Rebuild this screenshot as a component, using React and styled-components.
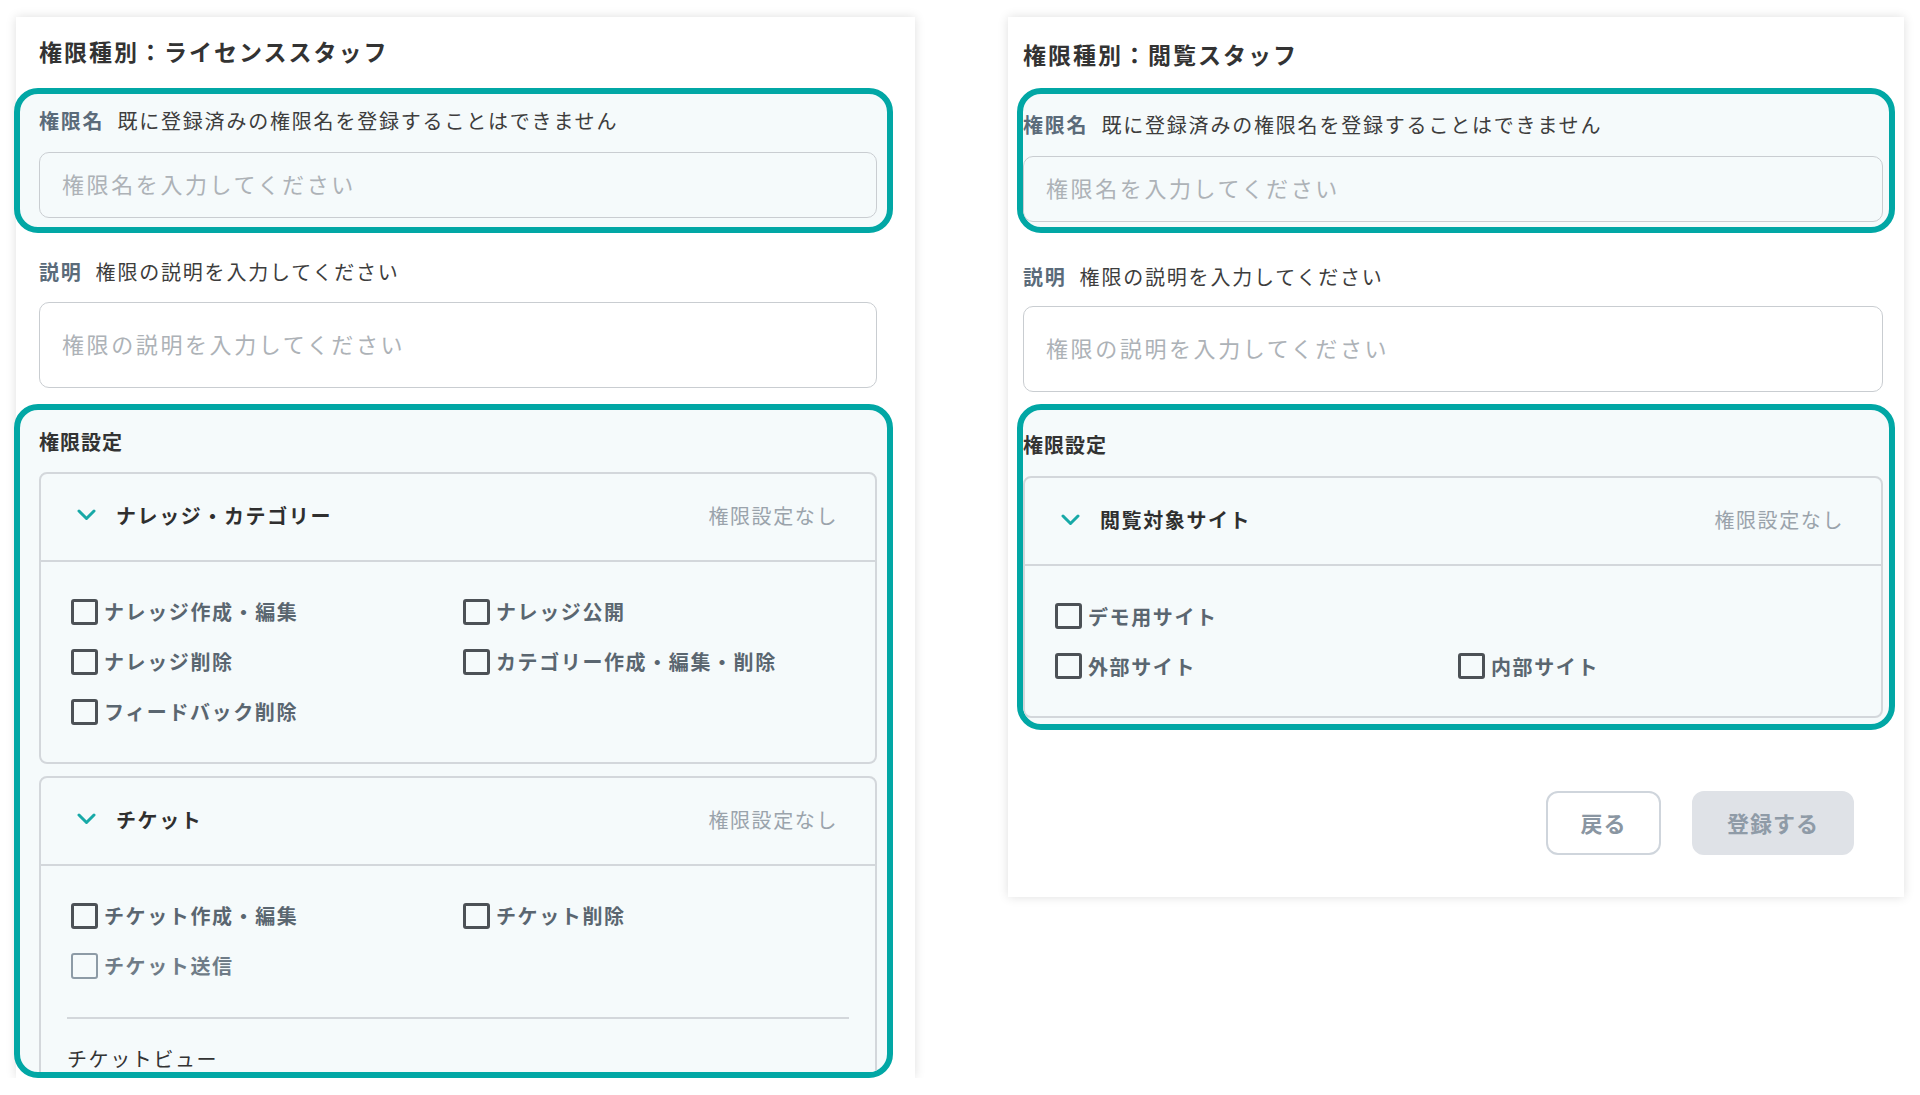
import styled, { createGlobalStyle } from "styled-components";

const GlobalStyle = createGlobalStyle`
  body {
    margin: 0;
    background: #ffffff;
    font-family: "Noto Sans CJK JP", "Noto Sans", sans-serif;
    color: #333;
  }
`;

const Page = styled.div`
  display: flex;
  align-items: flex-start;
  gap: 93px;
  padding: 17px 0 0 16px;
`;

// 画面のキャプチャ1枚分
const Panel = styled.section`
  width: ${(p) => p.$w}px;
  height: ${(p) => p.$h}px;
  box-sizing: border-box;
  padding: ${(p) => p.$pad};
  background: #fff;
  box-shadow: 0 0 10px rgba(0, 0, 0, 0.13);
  display: flex;
  flex-direction: column;
`;

const Title = styled.h2`
  margin: 0 0 ${(p) => p.$mb}px;
  font-size: 23px;
  line-height: 34px;
  font-weight: 700;
  letter-spacing: 2px;
  color: #333;
`;

// 注目箇所を囲む枠
const Highlight = styled.div`
  border: 6px solid #01a7a5;
  border-radius: 24px;
  background: #f5fafb;
  margin: ${(p) => p.$mt || 0}px ${(p) => p.$mr}px 0 ${(p) => p.$ml}px;
  padding: ${(p) => p.$pad};
  height: ${(p) => (p.$h ? `${p.$h}px` : "auto")};
  box-sizing: border-box;
  overflow: hidden;
  display: flex;
  flex-direction: column;
`;

const Field = styled.div`
  display: flex;
  flex-direction: column;
  gap: ${(p) => p.$gap}px;
  margin-top: ${(p) => p.$mt || 0}px;
`;

const LabelRow = styled.div`
  display: flex;
  align-items: center;
  gap: 13px;
  font-size: 20px;
  line-height: 30px;
  letter-spacing: 1.8px;
  white-space: nowrap;
`;

const LabelName = styled.span`
  font-weight: 700;
  color: #5b6b7a;
`;

const LabelNote = styled.span`
  color: #3d3d3d;
`;

const TextInput = styled.input`
  height: ${(p) => p.$h}px;
  box-sizing: border-box;
  border: 1.5px solid #c9cdd1;
  border-radius: 10px;
  background: transparent;
  padding: 0 22px 4px;
  font-family: inherit;
  font-size: 22px;
  letter-spacing: 2.6px;
  color: #333;
  outline: none;
  &::placeholder {
    color: #adb2b7;
  }
`;

const SectionLabel = styled.div`
  font-size: 20px;
  line-height: 30px;
  font-weight: 700;
  letter-spacing: 1px;
  color: #333;
  margin-bottom: ${(p) => p.$mb}px;
`;

const Card = styled.div`
  border: 2px solid #d3d7db;
  border-radius: 8px;
  background: #f5fafb;
  flex-shrink: 0;
  & + & {
    margin-top: 12px;
  }
`;

const CardHeader = styled.div`
  height: 88px;
  box-sizing: border-box;
  display: flex;
  align-items: center;
  padding: 0 37px 3px 36px;
  border-bottom: 2px solid #d3d7db;
`;

const Chevron = styled.svg`
  width: 19px;
  height: 12px;
  margin-right: 20px;
  flex-shrink: 0;
`;

const CardTitle = styled.span`
  flex: 1;
  font-size: 20px;
  font-weight: 700;
  letter-spacing: 1.6px;
  color: #2f2f2f;
`;

const CardStatus = styled.span`
  font-size: 20px;
  letter-spacing: 1.6px;
  color: #9aa3ab;
`;

const CardBody = styled.div`
  padding: 35px 30px 35px;
`;

const CheckGrid = styled.div`
  display: grid;
  grid-template-columns: 1fr 1fr;
  column-gap: 10px;
  row-gap: 20px;
`;

const CheckItem = styled.label`
  display: flex;
  align-items: center;
  gap: 6px;
  height: 30px;
  grid-column: ${(p) => (p.$full ? "1 / -1" : "auto")};
  font-size: 20px;
  font-weight: 700;
  letter-spacing: 1.6px;
  color: ${(p) => (p.$disabled ? "#6f7c87" : "#5a6670")};
  white-space: nowrap;
`;

const Box = styled.span`
  width: 27px;
  height: 26px;
  box-sizing: border-box;
  border: 3px solid ${(p) => (p.$disabled ? "#8d9ba6" : "#4c5156")};
  border-width: ${(p) => (p.$disabled ? "2.5px" : "3px")};
  border-radius: 3px;
  flex-shrink: 0;
`;

const SubSection = styled.div`
  margin: 36px -4px 0;
  border-top: 2px solid #d3d7db;
  padding-top: 25px;
`;

const SubTitle = styled.div`
  font-size: 20px;
  line-height: 30px;
  letter-spacing: 1.6px;
  color: #333;
`;

const Actions = styled.div`
  display: flex;
  justify-content: flex-end;
  gap: 31px;
  margin: 61px 29px 0 0;
`;

const Button = styled.button`
  height: 64px;
  width: ${(p) => p.$w}px;
  border-radius: 12px;
  border: 2px solid ${(p) => (p.$primary ? "#dfe2e7" : "#cfd5dc")};
  background: ${(p) => (p.$primary ? "#dfe2e7" : "#fff")};
  color: ${(p) => (p.$primary ? "#8f9ba7" : "#8a96a2")};
  font-family: inherit;
  font-size: 22px;
  font-weight: 700;
  letter-spacing: 1px;
  padding: 0 0 3px;
`;

function ChevronIcon() {
  return (
    <Chevron viewBox="0 0 19 12">
      <polyline
        points="2,2 9.5,9.5 17,2"
        fill="none"
        stroke="#17a9a7"
        strokeWidth="3"
        strokeLinecap="round"
        strokeLinejoin="round"
      />
    </Chevron>
  );
}

function Check({ label, full, disabled }) {
  return (
    <CheckItem $full={full} $disabled={disabled}>
      <Box $disabled={disabled} />
      {label}
    </CheckItem>
  );
}

function PermissionCard({ title, children }) {
  return (
    <Card>
      <CardHeader>
        <ChevronIcon />
        <CardTitle>{title}</CardTitle>
        <CardStatus>権限設定なし</CardStatus>
      </CardHeader>
      <CardBody>{children}</CardBody>
    </Card>
  );
}

function LicenseStaff() {
  return (
    <Panel $w={899} $h={1061} $pad="17px 38px 0 23px">
      <Title $mb={20}>権限種別：ライセンススタッフ</Title>

      <Highlight $ml={-25} $mr={-16} $pad="12px 10px 9px 19px">
        <Field $gap={16}>
          <LabelRow>
            <LabelName>権限名</LabelName>
            <LabelNote>既に登録済みの権限名を登録することはできません</LabelNote>
          </LabelRow>
          <TextInput $h={66} placeholder="権限名を入力してください" />
        </Field>
      </Highlight>

      <Field $gap={15} $mt={24}>
        <LabelRow>
          <LabelName>説明</LabelName>
          <LabelNote>権限の説明を入力してください</LabelNote>
        </LabelRow>
        <TextInput $h={86} placeholder="権限の説明を入力してください" />
      </Field>

      <Highlight $mt={16} $ml={-25} $mr={-16} $h={676} $pad="17px 10px 0 19px">
        <SectionLabel $mb={15}>権限設定</SectionLabel>
        <PermissionCard title="ナレッジ・カテゴリー">
          <CheckGrid>
            <Check label="ナレッジ作成・編集" />
            <Check label="ナレッジ公開" />
            <Check label="ナレッジ削除" />
            <Check label="カテゴリー作成・編集・削除" />
            <Check label="フィードバック削除" />
          </CheckGrid>
        </PermissionCard>
        <PermissionCard title="チケット">
          <CheckGrid>
            <Check label="チケット作成・編集" />
            <Check label="チケット削除" />
            <Check label="チケット送信" disabled />
          </CheckGrid>
          <SubSection>
            <SubTitle>チケットビュー</SubTitle>
          </SubSection>
        </PermissionCard>
      </Highlight>
    </Panel>
  );
}

function ViewerStaff() {
  return (
    <Panel $w={896} $h={880} $pad="20px 21px 0 15px">
      <Title $mb={17}>権限種別：閲覧スタッフ</Title>

      <Highlight $ml={-6} $mr={-12} $pad="16px 6px 5px 0">
        <Field $gap={16}>
          <LabelRow>
            <LabelName>権限名</LabelName>
            <LabelNote>既に登録済みの権限名を登録することはできません</LabelNote>
          </LabelRow>
          <TextInput $h={66} placeholder="権限名を入力してください" />
        </Field>
      </Highlight>

      <Field $gap={14} $mt={29}>
        <LabelRow>
          <LabelName>説明</LabelName>
          <LabelNote>権限の説明を入力してください</LabelNote>
        </LabelRow>
        <TextInput $h={86} placeholder="権限の説明を入力してください" />
      </Field>

      <Highlight $mt={12} $ml={-6} $mr={-12} $pad="20px 6px 6px 0">
        <SectionLabel $mb={16}>権限設定</SectionLabel>
        <PermissionCard title="閲覧対象サイト">
          <CheckGrid>
            <Check label="デモ用サイト" full />
            <Check label="外部サイト" />
            <Check label="内部サイト" />
          </CheckGrid>
        </PermissionCard>
      </Highlight>

      <Actions>
        <Button $w={115}>戻る</Button>
        <Button $w={162} $primary>
          登録する
        </Button>
      </Actions>
    </Panel>
  );
}

export default function App() {
  return (
    <>
      <GlobalStyle />
      <Page>
        <LicenseStaff />
        <ViewerStaff />
      </Page>
    </>
  );
}
